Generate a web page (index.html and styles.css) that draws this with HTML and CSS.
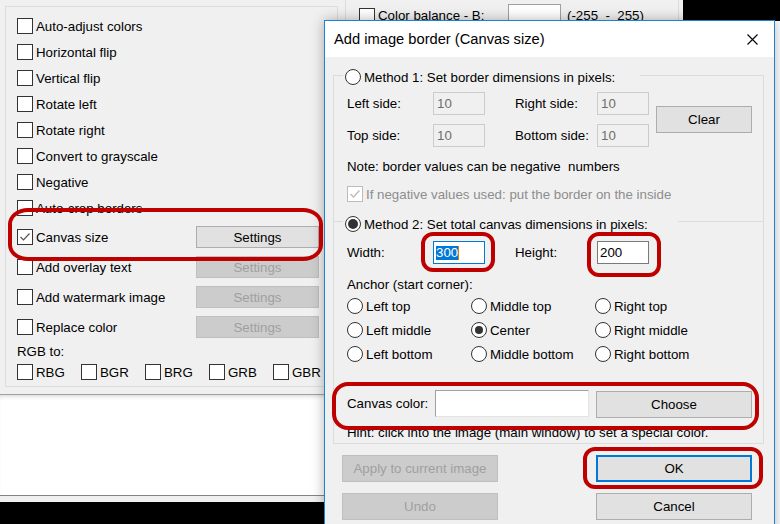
FILE: index.html
```html
<!DOCTYPE html>
<html lang="en">
<head>
  <meta charset="UTF-8">
  <title>Add image border (Canvas size)</title>
  <link rel="stylesheet" href="styles.css">
</head>
<body>
<div class="screen">

  <!-- main window behind the dialog -->
  <div class="mainwin">
    <div class="group left-group">
      <div class="row"><span class="cb"></span>Auto-adjust colors</div>
      <div class="row"><span class="cb"></span>Horizontal flip</div>
      <div class="row"><span class="cb"></span>Vertical flip</div>
      <div class="row"><span class="cb"></span>Rotate left</div>
      <div class="row"><span class="cb"></span>Rotate right</div>
      <div class="row"><span class="cb"></span>Convert to grayscale</div>
      <div class="row"><span class="cb"></span>Negative</div>
      <div class="row"><span class="cb"></span>Auto-crop borders</div>
      <div class="row btn-row first-btn-row">
        <span class="cb"><svg viewBox="0 0 14 14" width="14" height="14"><polyline points="2.5,7 5.5,10 11.5,3.5" fill="none" stroke="#555" stroke-width="1.2"/></svg></span>
        <span class="lbl">Canvas size</span>
        <div class="btn">Settings</div>
      </div>
      <div class="row btn-row"><span class="cb"></span><span class="lbl">Add overlay text</span><div class="btn disabled">Settings</div></div>
      <div class="row btn-row"><span class="cb"></span><span class="lbl">Add watermark image</span><div class="btn disabled">Settings</div></div>
      <div class="row btn-row"><span class="cb"></span><span class="lbl">Replace color</span><div class="btn disabled">Settings</div></div>
      <div class="rgb-label">RGB to:</div>
      <div class="rgb-row">
        <div class="rgb-item"><span class="cb"></span>RBG</div>
        <div class="rgb-item"><span class="cb"></span>BGR</div>
        <div class="rgb-item"><span class="cb"></span>BRG</div>
        <div class="rgb-item"><span class="cb"></span>GRB</div>
        <div class="rgb-item"><span class="cb"></span>GBR</div>
      </div>
    </div>
    <div class="group right-group">
      <div class="row balance-row">
        <span class="cb"></span>
        <span class="balance-label">Color balance - B:</span>
        <span class="field"></span>
        <span class="range">(-255&nbsp; - &nbsp;255)</span>
      </div>
    </div>
  </div>
  <div class="viewer"></div>
  <div class="statusbar"></div>
  <div class="backdrop"></div>

  <!-- dialog -->
  <div class="dialog">
    <div class="titlebar">
      <span>Add image border (Canvas size)</span>
      <svg class="close" viewBox="0 0 11 11" width="11" height="11"><path d="M0.5 0.5 L10.5 10.5 M10.5 0.5 L0.5 10.5" stroke="#000" stroke-width="1.1"/></svg>
    </div>
    <div class="dlg-body">
      <div class="box">
        <div class="legend legend1"><span class="radio"></span>Method 1: Set border dimensions in pixels:</div>

        <div class="dims">
          <span class="dim-label">Left side:</span>
          <span class="input off">10</span>
          <span class="dim-label">Right side:</span>
          <span class="input off">10</span>
          <div class="btn clear">Clear</div>
          <span class="dim-label">Top side:</span>
          <span class="input off">10</span>
          <span class="dim-label">Bottom side:</span>
          <span class="input off">10</span>
        </div>

        <div class="note">Note: border values can be negative&nbsp; numbers</div>
        <div class="neg-row"><span class="cb off"><svg viewBox="0 0 14 14" width="14" height="14"><polyline points="2.5,7 5.5,10 11.5,3.5" fill="none" stroke="#bcbcbc" stroke-width="1.4"/></svg></span>If negative values used: put the border on the inside</div>

        <div class="sep">
          <div class="legend legend2"><span class="radio on"></span>Method 2: Set total canvas dimensions in pixels:</div>
        </div>

        <div class="dims dims2">
          <span class="dim-label">Width:</span>
          <span class="input focus"><span class="sel">300</span><span class="caret"></span></span>
          <span class="dim-label">Height:</span>
          <span class="input">200</span>
        </div>

        <div class="anchor-label">Anchor (start corner):</div>
        <div class="anchors">
          <div class="opt"><span class="radio"></span>Left top</div>
          <div class="opt"><span class="radio"></span>Middle top</div>
          <div class="opt"><span class="radio"></span>Right top</div>
          <div class="opt"><span class="radio"></span>Left middle</div>
          <div class="opt"><span class="radio center"></span>Center</div>
          <div class="opt"><span class="radio"></span>Right middle</div>
          <div class="opt"><span class="radio"></span>Left bottom</div>
          <div class="opt"><span class="radio"></span>Middle bottom</div>
          <div class="opt"><span class="radio"></span>Right bottom</div>
        </div>

        <div class="color-row">
          <span class="color-label">Canvas color:</span>
          <span class="color-field"></span>
          <div class="btn choose">Choose</div>
        </div>
        <div class="hint">Hint: click into the image (main window) to set a special color.</div>
      </div>

      <div class="actions">
        <div class="btn disabled">Apply to current image</div>
        <div class="btn ok">OK</div>
        <div class="btn disabled">Undo</div>
        <div class="btn">Cancel</div>
      </div>
    </div>
  </div>

  <!-- red annotation marks -->
  <div class="mark mark-canvas"></div>
  <div class="mark mark-width"></div>
  <div class="mark mark-height"></div>
  <div class="mark mark-color"></div>
  <div class="mark mark-ok"></div>
</div>
</body>
</html>
```

FILE: styles.css
```css
* {
  box-sizing: border-box;
}
body {
  margin: 0;
  background: #000;
  font-family: "Liberation Sans", Arial, sans-serif;
  font-size: 13.3px;
  color: #000;
}
.screen {
  position: relative;
  width: 780px;
  height: 524px;
  overflow: hidden;
}

/* main window */
.mainwin {
  position: absolute;
  left: 0;
  top: 0;
  width: 683px;
  height: 395px;
  background: #f0f0f0;
  border-bottom: 1px solid #a0a0a0;
  display: flex;
  align-items: flex-start;
  gap: 7px;
  padding-left: 5px;
}
.group {
  border: 1px solid #dcdcdc;
}
.left-group {
  margin-top: 6px;
  width: 333px;
  height: 381px;
  padding: 6px 0 0 11px;
}
.row {
  display: flex;
  align-items: center;
  height: 26px;
}
.cb {
  width: 16px;
  height: 16px;
  border: 1px solid #333;
  background: #fff;
  margin-right: 3px;
  flex: none;
  display: flex;
  align-items: center;
  justify-content: center;
}
.cb.off {
  border-color: #bcbcbc;
}
.btn-row {
  height: 30px;
}
.first-btn-row {
  margin-top: 1px;
}
.lbl {
  flex: 1;
}
.btn {
  background: #e1e1e1;
  border: 1px solid #adadad;
  display: flex;
  align-items: center;
  justify-content: center;
  height: 27px;
}
.btn-row .btn {
  width: 123px;
  height: 22px;
  margin-right: 18px;
}
.btn.disabled {
  background: #cccccc;
  border-color: #bfbfbf;
  color: #a0a0a0;
}
.rgb-label {
  margin-top: 2px;
  line-height: 15px;
}
.rgb-row {
  display: flex;
  margin-top: 5px;
}
.rgb-item {
  width: 64px;
  height: 16px;
  display: flex;
  align-items: center;
}

.right-group {
  width: 334px;
  height: 394px;
  border-top: none;
  padding: 4px 0 0 13px;
}
.balance-row {
  height: 23px;
}
.balance-label {
  width: 130px;
}
.field {
  width: 53px;
  height: 23px;
  background: #fff;
  border: 1px solid #a0a0a0;
}
.range {
  margin-left: 6px;
}

.viewer {
  position: absolute;
  left: 0;
  top: 395px;
  width: 340px;
  height: 100px;
  background: #fff;
  box-shadow: inset 0 4px 5px -3px rgba(0, 0, 0, 0.18);
}
.statusbar {
  position: absolute;
  left: 0;
  top: 495px;
  width: 340px;
  height: 7px;
  background: #f0f0f0;
  border-top: 1px solid #838383;
}
.backdrop {
  position: absolute;
  left: 700px;
  top: 21px;
  width: 80px;
  height: 503px;
  background: #fff;
}

/* dialog */
.dialog {
  position: absolute;
  left: 324px;
  top: 20px;
  width: 451px;
  height: 520px;
  background: #f0f0f0;
  border: 1px solid #1883d7;
  box-shadow: 0 0 12px rgba(0, 0, 0, 0.3);
}
.titlebar {
  height: 36px;
  background: #fff;
  display: flex;
  align-items: center;
  justify-content: space-between;
  padding: 0 16px 0 9px;
  font-size: 14.7px;
}
.dlg-body {
  padding: 18px 10px 0 8px;
}
.box {
  border: 1px solid #dcdcdc;
  height: 369px;
}
.legend {
  display: flex;
  align-items: center;
  height: 18px;
  background: #f0f0f0;
  padding-left: 2px;
}
.legend1 {
  margin: -8px 0 0 9px;
  width: 297px;
}
.radio {
  width: 16px;
  height: 16px;
  border: 1px solid #333;
  border-radius: 50%;
  background: #fff;
  margin-right: 3px;
  flex: none;
  display: flex;
  align-items: center;
  justify-content: center;
}
.radio.on::after,
.radio.center::after {
  content: "";
  width: 10px;
  height: 10px;
  border-radius: 50%;
  background: #333;
}
.radio.center::after {
  width: 8px;
  height: 8px;
}
.dims {
  display: grid;
  grid-template-columns: 86px 82px 82px 59px 96px;
  grid-template-rows: 23px 23px;
  row-gap: 9px;
  margin-top: 6px;
  padding-left: 13px;
  align-items: center;
}
.dims .clear {
  grid-column: 5;
  grid-row: 1 / span 2;
}
.input {
  width: 52px;
  height: 23px;
  background: #fff;
  border: 1px solid #7a7a7a;
  padding-left: 2px;
  display: flex;
  align-items: center;
}
.input.off {
  background: #f0f0f0;
  border-color: #cccccc;
  color: #6d6d6d;
  padding-left: 3px;
}
.input.focus {
  border-color: #0078d7;
}
.sel {
  background: #0078d7;
  color: #fff;
  line-height: 14px;
}
.caret {
  width: 1px;
  height: 14px;
  background: #e07a10;
}
.note {
  margin-top: 12px;
  padding-left: 13px;
  line-height: 15px;
}
.neg-row {
  display: flex;
  align-items: center;
  height: 16px;
  margin-top: 12px;
  padding-left: 13px;
  color: #8d8d8d;
}
.sep {
  margin-top: 19px;
  height: 1px;
  background: #dcdcdc;
  display: flex;
  align-items: flex-start;
}
.legend2 {
  margin: -6px 0 0 9px;
  width: 335px;
  flex: none;
}
.dims2 {
  margin-top: 19px;
  grid-template-rows: 23px;
}
.anchor-label {
  margin-top: 13px;
  padding-left: 13px;
  line-height: 15px;
}
.anchors {
  display: grid;
  grid-template-columns: 124px 124px 124px;
  grid-auto-rows: 16px;
  row-gap: 8px;
  margin-top: 6px;
  padding-left: 13px;
}
.opt {
  display: flex;
  align-items: center;
}
.color-row {
  display: flex;
  align-items: center;
  margin-top: 28px;
  padding-left: 13px;
  height: 27px;
}
.color-label {
  width: 88px;
}
.color-field {
  width: 154px;
  height: 27px;
  background: #fff;
  border: 1px solid #e3e3e3;
  border-top-color: #a0a0a0;
  border-left-color: #a0a0a0;
  margin-right: 7px;
}
.choose {
  width: 156px;
  margin-top: 1px;
}
.hint {
  margin-top: 8px;
  padding-left: 13px;
  line-height: 15px;
}
.actions {
  display: grid;
  grid-template-columns: 156px 156px;
  grid-auto-rows: 27px;
  column-gap: 98px;
  row-gap: 11px;
  margin-top: 11px;
  padding-left: 9px;
}
.btn.ok {
  border: 2px solid #0078d7;
}

/* red annotation marks */
.mark {
  position: absolute;
  border: 4px solid #bf0000;
  border-radius: 12px;
}
.mark-canvas {
  left: 8px;
  top: 208px;
  width: 315px;
  height: 53px;
  border-radius: 20px / 16px;
}
.mark-width {
  left: 421px;
  top: 232px;
  width: 74px;
  height: 40px;
}
.mark-height {
  left: 587px;
  top: 232px;
  width: 74px;
  height: 45px;
}
.mark-color {
  left: 332px;
  top: 382px;
  width: 427px;
  height: 48px;
  border-radius: 16px;
}
.mark-ok {
  left: 583px;
  top: 447px;
  width: 180px;
  height: 42px;
}
```
